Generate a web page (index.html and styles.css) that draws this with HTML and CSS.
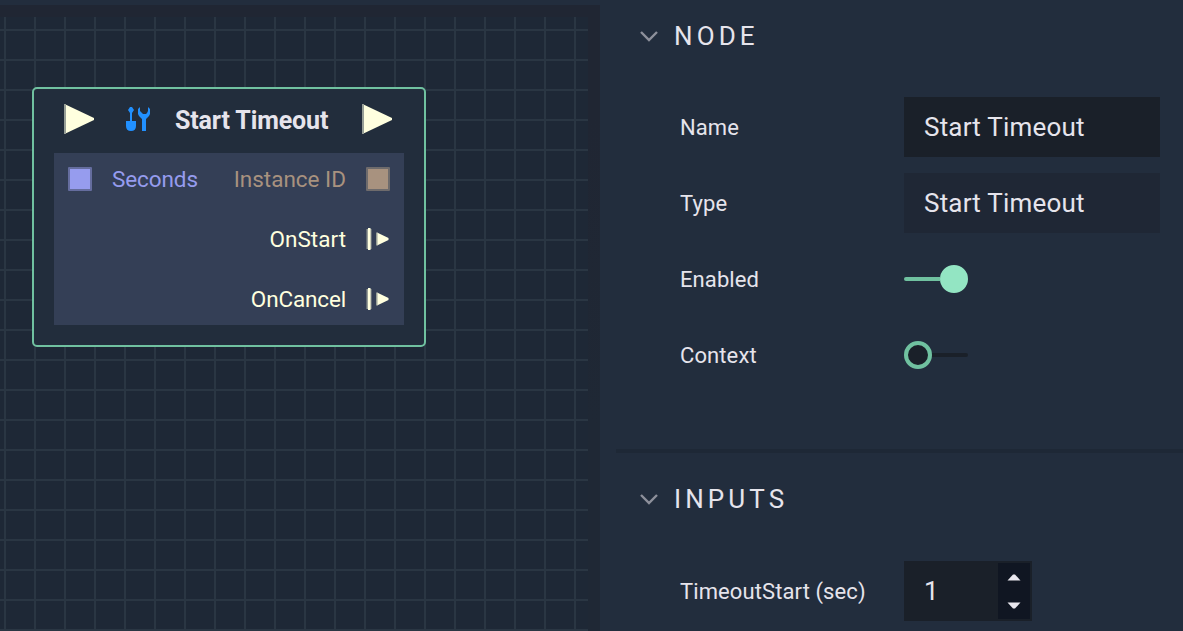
FILE: index.html
```html
<!DOCTYPE html>
<html lang="en">
<head>
<meta charset="utf-8">
<title>Node editor</title>
<link rel="stylesheet" href="styles.css">
</head>
<body>
<main class="editor">
  <section class="canvas">
    <div class="grid"></div>
    <article class="node">
      <header class="node-header">
        <svg class="flow" width="32" height="32" viewBox="0 0 32 32"><path class="cream" d="M1.5 1.5 30 15v2L1.5 30.5z"/><path class="edge" d="M0 1h2v30H0z"/></svg>
        <svg class="tools" width="26" height="26" viewBox="0 0 26 26"><path d="M4 0h2l2 3-2 3v8h4v5q0 5-5 5t-5-5v-5h4V6L2 3z"/><path d="M14 0v4l2 2 1 1h3l1-1 1-2V0l2 2v5l-1 2-3 3v12h-4V12l-3-3-1-2V2z"/></svg>
        <h1 class="node-title">Start Timeout</h1>
        <svg class="flow flow-out" width="32" height="32" viewBox="0 0 32 32"><path class="cream" d="M1.5 1.5 30 15v2L1.5 30.5z"/><path class="edge" d="M0 1h2v30H0z"/></svg>
      </header>
      <div class="ports">
        <div class="port-row">
          <span class="pin pin-seconds"></span><span class="seconds">Seconds</span>
          <span class="instance">Instance ID</span><span class="pin pin-instance"></span>
        </div>
        <div class="port-row output">
          <span class="on-start">OnStart</span>
          <svg class="event" width="24" height="24" viewBox="0 0 24 24"><path class="edge" d="M.5 2h5v20h-5z"/><path class="cream" d="M2 1h2.5v22H2zM11 5.5l11.5 5.5v2L11 18.5z"/><path class="edge" d="M10 5.5h1.5v13H10z"/></svg>
        </div>
        <div class="port-row output">
          <span class="on-cancel">OnCancel</span>
          <svg class="event" width="24" height="24" viewBox="0 0 24 24"><path class="edge" d="M.5 2h5v20h-5z"/><path class="cream" d="M2 1h2.5v22H2zM11 5.5l11.5 5.5v2L11 18.5z"/><path class="edge" d="M10 5.5h1.5v13H10z"/></svg>
        </div>
      </div>
    </article>
  </section>
  <aside class="inspector">
    <section class="group">
      <h2 class="group-title"><svg class="chevron" width="18" height="12" viewBox="0 0 18 12"><path d="m1 1 8 8 8-8"/></svg><span>NODE</span></h2>
      <div class="fields">
        <div class="field"><label>Name</label><div class="box">Start Timeout</div></div>
        <div class="field"><label>Type</label><div class="box readonly">Start Timeout</div></div>
        <div class="field"><label>Enabled</label><div class="switch on"><i class="track"></i><i class="knob"></i></div></div>
        <div class="field"><label>Context</label><div class="switch"><i class="knob"></i><i class="track"></i></div></div>
      </div>
    </section>
    <section class="group inputs">
      <h2 class="group-title"><svg class="chevron" width="18" height="12" viewBox="0 0 18 12"><path d="m1 1 8 8 8-8"/></svg><span>INPUTS</span></h2>
      <div class="fields">
        <div class="field"><label>TimeoutStart (sec)</label><div class="box number"><span>1</span>
          <div class="stepper"><svg width="14" height="7" viewBox="0 0 14 7"><path d="M.5 6.5 6 .5h2l5.5 6z"/></svg><svg width="14" height="7" viewBox="0 0 14 7"><path d="M.5.5h13L8 6.5H6z"/></svg></div></div></div>
      </div>
    </section>
  </aside>
</main>
</body>
</html>
```
FILE: styles.css
```css
* { box-sizing: border-box; }
body { margin: 0; background: #222d3d; font-family: Roboto, "Liberation Sans", sans-serif; color: #e6e4ec; }
svg { display: block; flex: none; }
.editor { display: flex; width: 1183px; height: 631px; overflow: hidden; }
.canvas { position: relative; width: 600px; height: 626px; margin-top: 5px; padding: 12px 12px 0 0; background: linear-gradient(#202633 0 112px, #1f2835 420px); }
.grid {
  height: 614px;
  background-color: #1e2836;
  background-image: linear-gradient(#2a3643 2px, transparent 2px), linear-gradient(90deg, #2a3643 2px, transparent 2px);
  background-size: 30px 30px;
  background-position: 0 12px, 4px 0;
}
.node { position: absolute; left: 32px; top: 82px; width: 394px; height: 260px; padding: 0 20px; border: 2px solid #70c1a0; border-radius: 5px; background: #222d3c; }
.node-header { display: flex; align-items: center; height: 60px; margin-bottom: 4px; padding: 0 10px; }
.cream { fill: #ffffdf; }
.edge { fill: #989f97; }
.tools { fill: #2190ff; margin-left: 30px; margin-top: 2px; }
.node-title { margin: 3px 0 0 23px; font-size: 25px; line-height: 30px; font-weight: 700; letter-spacing: -.12px; white-space: nowrap; }
.flow-out { margin-left: auto; }
.ports { height: 172px; background: #343f56; }
.port-row { display: flex; align-items: center; height: 60px; padding: 0 14px; font-size: 22.5px; white-space: nowrap; }
.port-row:first-child { height: 52px; }
.port-row:nth-child(2) { margin-top: 4px; }
.output { justify-content: flex-end; color: #ffffdf; }
.pin { width: 24px; height: 24px; border: 2px solid; background-clip: padding-box; border-radius: 1px; }
.pin-seconds { background-color: #969cee; border-color: #656d9e; margin-right: 20px; }
.pin-instance { background-color: #a8927f; border-color: #6e6b6c; margin-left: 20px; }
.seconds { color: #969cee; letter-spacing: -.1px; }
.instance { margin-left: auto; color: #a8927f; letter-spacing: 0; }
.on-start, .on-cancel { margin-right: 20px; }
.on-cancel { letter-spacing: -.15px; }
.inspector { width: 567px; margin-left: 16px; }
.group { height: 449px; }
.inputs { border-top: 4px solid #1e2836; height: 190px; }
.group-title { display: flex; align-items: center; height: 73px; margin: 0; padding-left: 24px; font-size: 26px; font-weight: 400; }
.group-title span { margin: -2px 0 0 16px; letter-spacing: 4.1px; }
.inputs .group-title { height: 94px; }
.chevron { fill: none; stroke: #8d909b; stroke-width: 2.4; }
.fields { display: flex; flex-direction: column; gap: 16px; padding: 24px 23px 0 64px; }
.inputs .fields { padding-top: 14px; }
.field { display: flex; align-items: center; height: 60px; font-size: 22px; }
.field label { width: 224px; letter-spacing: .1px; white-space: nowrap; }
.box { width: 256px; height: 60px; padding-left: 20px; background: #1a2029; font-size: 26px; line-height: 60px; letter-spacing: .2px; }
.readonly { background: #1f2735; }
.switch { display: flex; align-items: center; width: 64px; }
.track { flex: 1; height: 4px; border-radius: 0 2px 2px 0; background: #1a2029; }
.knob { width: 28px; height: 28px; border: 4px solid #70c1a0; border-radius: 50%; background: #1a2029; }
.on .track { background: #70c1a0; border-radius: 2px 0 0 2px; }
.on .knob { background: #93e5c3; border-color: #93e5c3; }
.number { display: flex; justify-content: space-between; width: 128px; padding: 2px 2px 2px 20px; line-height: 56px; }
.stepper { display: flex; flex-direction: column; align-items: center; justify-content: space-between; width: 32px; height: 56px; padding: 11px 0 10px; background: #101622; }
.stepper svg { fill: #e9e7ee; }
```
